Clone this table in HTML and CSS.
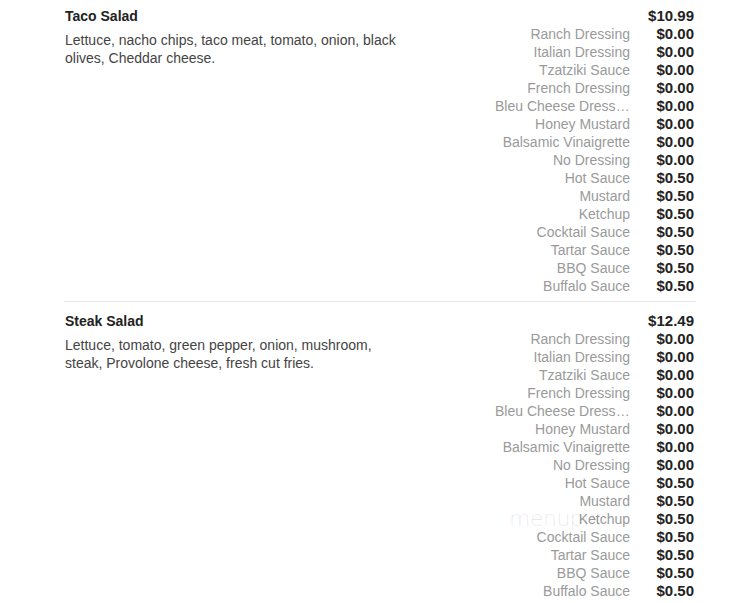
FILE: index.html
```html
<!DOCTYPE html>
<html>
<head>
<meta charset="utf-8">
<link rel="stylesheet" href="styles.css">
</head>
<body>
<div class="menu">
  <div class="item">
    <div class="info">
      <div class="title">Taco Salad</div>
      <div class="desc">Lettuce, nacho chips, taco meat, tomato, onion, black olives, Cheddar cheese.</div>
    </div>
    <div class="prices">
      <div class="row"><span class="name"></span><span class="price">$10.99</span></div>
      <div class="row"><span class="name">Ranch Dressing</span><span class="price">$0.00</span></div>
      <div class="row"><span class="name">Italian Dressing</span><span class="price">$0.00</span></div>
      <div class="row"><span class="name">Tzatziki Sauce</span><span class="price">$0.00</span></div>
      <div class="row"><span class="name">French Dressing</span><span class="price">$0.00</span></div>
      <div class="row"><span class="name">Bleu Cheese Dressing</span><span class="price">$0.00</span></div>
      <div class="row"><span class="name">Honey Mustard</span><span class="price">$0.00</span></div>
      <div class="row"><span class="name">Balsamic Vinaigrette</span><span class="price">$0.00</span></div>
      <div class="row"><span class="name">No Dressing</span><span class="price">$0.00</span></div>
      <div class="row"><span class="name">Hot Sauce</span><span class="price">$0.50</span></div>
      <div class="row"><span class="name">Mustard</span><span class="price">$0.50</span></div>
      <div class="row"><span class="name">Ketchup</span><span class="price">$0.50</span></div>
      <div class="row"><span class="name">Cocktail Sauce</span><span class="price">$0.50</span></div>
      <div class="row"><span class="name">Tartar Sauce</span><span class="price">$0.50</span></div>
      <div class="row"><span class="name">BBQ Sauce</span><span class="price">$0.50</span></div>
      <div class="row"><span class="name">Buffalo Sauce</span><span class="price">$0.50</span></div>
    </div>
  </div>
  <div class="item">
    <div class="info">
      <div class="title">Steak Salad</div>
      <div class="desc">Lettuce, tomato, green pepper, onion, mushroom, steak, Provolone cheese, fresh cut fries.</div>
    </div>
    <div class="prices">
      <div class="row"><span class="name"></span><span class="price">$12.49</span></div>
      <div class="row"><span class="name">Ranch Dressing</span><span class="price">$0.00</span></div>
      <div class="row"><span class="name">Italian Dressing</span><span class="price">$0.00</span></div>
      <div class="row"><span class="name">Tzatziki Sauce</span><span class="price">$0.00</span></div>
      <div class="row"><span class="name">French Dressing</span><span class="price">$0.00</span></div>
      <div class="row"><span class="name">Bleu Cheese Dressing</span><span class="price">$0.00</span></div>
      <div class="row"><span class="name">Honey Mustard</span><span class="price">$0.00</span></div>
      <div class="row"><span class="name">Balsamic Vinaigrette</span><span class="price">$0.00</span></div>
      <div class="row"><span class="name">No Dressing</span><span class="price">$0.00</span></div>
      <div class="row"><span class="name">Hot Sauce</span><span class="price">$0.50</span></div>
      <div class="row"><span class="name">Mustard</span><span class="price">$0.50</span></div>
      <div class="row"><span class="name">Ketchup</span><span class="price">$0.50</span></div>
      <div class="row"><span class="name">Cocktail Sauce</span><span class="price">$0.50</span></div>
      <div class="row"><span class="name">Tartar Sauce</span><span class="price">$0.50</span></div>
      <div class="row"><span class="name">BBQ Sauce</span><span class="price">$0.50</span></div>
      <div class="row"><span class="name">Buffalo Sauce</span><span class="price">$0.50</span></div>
    </div>
    <div class="watermark">menupix</div>
  </div>
</div>
</body>
</html>
```

FILE: styles.css
```css
html, body {
  margin: 0;
  padding: 0;
  background: #ffffff;
}
body {
  font-family: "Liberation Sans", Arial, sans-serif;
  font-size: 14px;
  line-height: 18px;
  color: #333333;
}
.menu {
  width: 632px;
  margin-left: 64px;
}
.item {
  position: relative;
  display: flex;
  justify-content: space-between;
  align-items: flex-start;
  padding: 10px 2px 6px 1px;
  border-bottom: 1px solid #e6e6e6;
}
.item:first-child {
  padding-top: 7px;
}
.info {
  width: 340px;
}
.title {
  font-weight: bold;
  font-size: 14px;
  color: #222222;
}
.desc {
  margin-top: 6px;
  color: #444444;
}
.prices {
  display: flex;
  flex-direction: column;
  width: 199px;
}
.row {
  display: flex;
  height: 18px;
}
.name {
  width: 135px;
  text-align: right;
  color: #9a9a9a;
  white-space: nowrap;
  overflow: hidden;
  text-overflow: ellipsis;
}
.price {
  width: 64px;
  text-align: right;
  font-weight: bold;
  font-size: 15px;
  color: #222222;
}
.watermark {
  position: absolute;
  left: 445px;
  top: 208px;
  font-size: 22px;
  font-family: "DejaVu Sans", sans-serif;
  font-weight: 200;
  letter-spacing: -0.5px;
  color: rgba(0, 0, 0, 0.1);
  pointer-events: none;
}
```
